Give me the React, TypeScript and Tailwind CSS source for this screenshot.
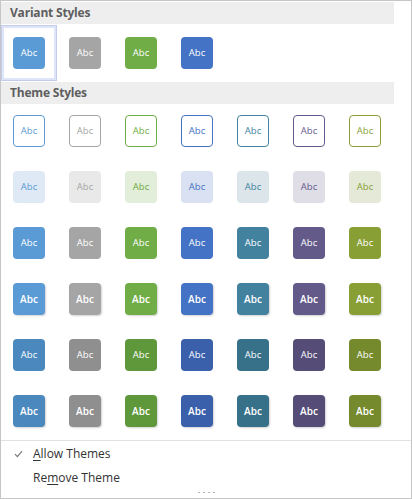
import React from 'react';

type Swatch = {
  line: string;
  tint: string;
  fill: string;
  dark: string;
};

// one entry per column of the theme gallery
const columns: Swatch[] = [
  { line: 'border-[#5b9bd5] text-[#5b9bd5]', tint: 'bg-[#dfe8f5] text-[#5b9bd5]', fill: 'bg-[#5b9bd5]', dark: 'bg-[#4a88be]' },
  { line: 'border-[#a5a5a5] text-[#a5a5a5]', tint: 'bg-[#e9e9e9] text-[#a5a5a5]', fill: 'bg-[#a5a5a5]', dark: 'bg-[#8f8f8f]' },
  { line: 'border-[#70ad47] text-[#70ad47]', tint: 'bg-[#e2eeda] text-[#6fa843]', fill: 'bg-[#70ad47]', dark: 'bg-[#5f983a]' },
  { line: 'border-[#4472c4] text-[#4472c4]', tint: 'bg-[#dae1f2] text-[#4472c4]', fill: 'bg-[#4472c4]', dark: 'bg-[#3a60ac]' },
  { line: 'border-[#42829f] text-[#42829f]', tint: 'bg-[#dbe5ea] text-[#42829f]', fill: 'bg-[#42829f]', dark: 'bg-[#377189]' },
  { line: 'border-[#635a8a] text-[#635a8a]', tint: 'bg-[#dfdde6] text-[#635a8a]', fill: 'bg-[#635a8a]', dark: 'bg-[#554c77]' },
  { line: 'border-[#889f35] text-[#889f35]', tint: 'bg-[#e4e9d8] text-[#889f35]', fill: 'bg-[#889f35]', dark: 'bg-[#748a2c]' },
];

const variants = ['bg-[#5b9bd5]', 'bg-[#a5a5a5]', 'bg-[#70ad47]', 'bg-[#4472c4]'];

const Tile = ({ className, bold }: { className: string; bold?: boolean }) => (
  <div
    className={`w-8 h-8 rounded-[4px] flex items-center justify-center leading-none ${
      bold ? 'font-semibold text-[10px] shadow-[1px_1px_2px_rgba(0,0,0,0.18)]' : 'text-[9.5px]'
    } ${className}`}
  >
    Abc
  </div>
);

const Header = ({ label }: { label: string }) => (
  <div className="h-[22px] bg-[#eeeeee] pl-[9px] flex items-center text-[12px] font-bold text-[#5e5e5e] tracking-[-0.2px]">
    {label}
  </div>
);

export default function App() {
  return (
    <div className="w-[412px] h-[499px] bg-white border border-[#c6c6c6] flex flex-col font-['Segoe_UI','Open_Sans',sans-serif] select-none">
      <div className="w-[393px] flex flex-col pt-px">
        <Header label="Variant Styles" />
        <div className="flex h-[58px] items-center">
          {variants.map((bg, i) => (
            <div
              key={bg}
              className={`w-[56px] h-[56px] flex items-center justify-center ${
                i === 0 ? 'border border-[#c3cbef] shadow-[inset_0_0_0_2px_#dfe5f8]' : ''
              }`}
            >
              <Tile className={`${bg} text-white`} />
            </div>
          ))}
        </div>
        <Header label="Theme Styles" />
        <div className="pt-[11px] pl-3 grid grid-cols-[repeat(7,32px)] gap-x-6 gap-y-6">
          {columns.map((c, i) => (
            <div key={'o' + i} className={`w-8 h-8 rounded-[4px] border bg-white flex items-center justify-center text-[9.5px] leading-none ${c.line}`}>
              Abc
            </div>
          ))}
          {columns.map((c, i) => (
            <Tile key={'t' + i} className={c.tint} />
          ))}
          {columns.map((c, i) => (
            <Tile key={'f' + i} className={`${c.fill} text-white`} />
          ))}
          {columns.map((c, i) => (
            <Tile key={'fb' + i} bold className={`${c.fill} text-white`} />
          ))}
          {columns.map((c, i) => (
            <Tile key={'d' + i} className={`${c.dark} text-white`} />
          ))}
          {columns.map((c, i) => (
            <Tile key={'db' + i} bold className={`${c.dark} text-white`} />
          ))}
        </div>
      </div>

      <div className="mt-auto border-t border-[#e1e1e1] flex flex-col pt-px">
        <div className="h-6 flex items-center text-[12px] text-[#333333]">
          <span className="w-8 flex justify-center pl-[2px]">
            <svg width="9" height="8" viewBox="0 0 9 8">
              <path d="M1 4.2 L3.4 6.6 L8 1.2" fill="none" stroke="#777777" strokeWidth="1.2" />
            </svg>
          </span>
          <span>
            <span className="underline underline-offset-2">A</span>llow Themes
          </span>
        </div>
        <div className="h-6 flex items-center text-[12px] text-[#333333] pl-8">
          <span>
            Re<span className="underline underline-offset-2">m</span>ove Theme
          </span>
        </div>
        <div className="h-[8px] flex justify-center items-start gap-[3px] pt-[2px]">
          <span className="w-[2px] h-[1px] bg-[#b4b4b4]" />
          <span className="w-[2px] h-[1px] bg-[#b4b4b4]" />
          <span className="w-[2px] h-[1px] bg-[#b4b4b4]" />
          <span className="w-[2px] h-[1px] bg-[#b4b4b4]" />
        </div>
      </div>
    </div>
  );
}
